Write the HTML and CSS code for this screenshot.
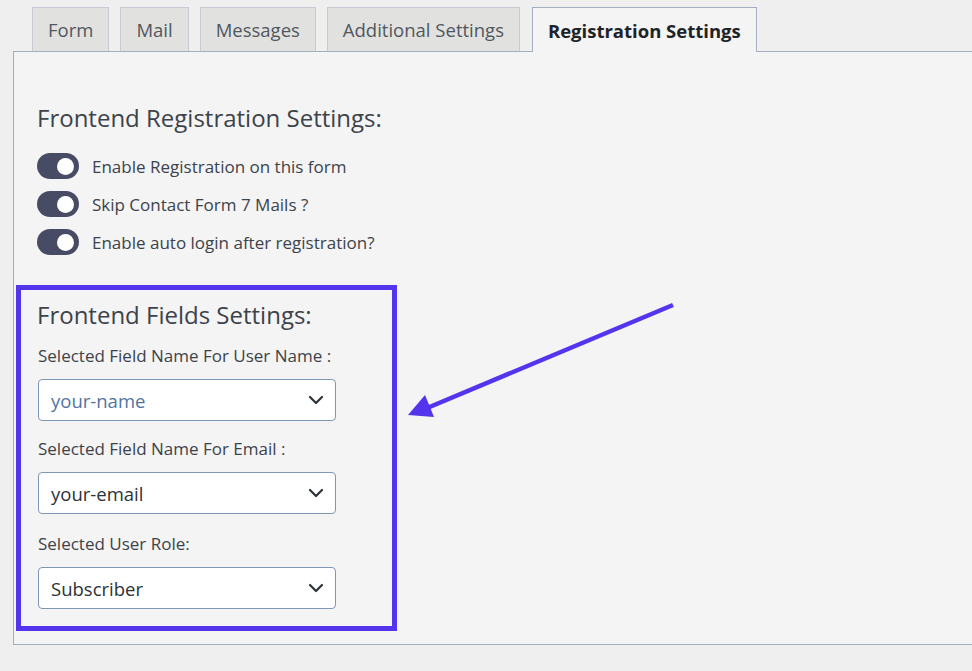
FILE: index.html
```html
<!DOCTYPE html>
<html lang="en">
<head>
<meta charset="utf-8">
<title>Registration Settings</title>
<link rel="stylesheet" href="styles.css">
</head>
<body>
<div class="page">
  <nav class="tabs">
    <a class="tab">Form</a>
    <a class="tab">Mail</a>
    <a class="tab">Messages</a>
    <a class="tab">Additional Settings</a>
    <a class="tab tab-active">Registration Settings</a>
  </nav>
  <div class="panel">
    <h2 class="section-title">Frontend Registration Settings:</h2>
    <ul class="toggles">
      <li class="toggle-row"><span class="toggle"><span class="knob"></span></span><span class="toggle-label">Enable Registration on this form</span></li>
      <li class="toggle-row"><span class="toggle"><span class="knob"></span></span><span class="toggle-label">Skip Contact Form 7 Mails ?</span></li>
      <li class="toggle-row"><span class="toggle"><span class="knob"></span></span><span class="toggle-label">Enable auto login after registration?</span></li>
    </ul>
    <div class="fields-box">
      <h2 class="section-title">Frontend Fields Settings:</h2>
      <div class="field field-first">
        <label class="field-label">Selected Field Name For User Name :</label>
        <div class="select select-focus"><span>your-name</span><svg class="chev" width="16" height="10" viewBox="0 0 16 10"><path d="M2 2l6 6 6-6" fill="none" stroke="#2c3338" stroke-width="2.2" stroke-linecap="round" stroke-linejoin="round"/></svg></div>
      </div>
      <div class="field field-second">
        <label class="field-label">Selected Field Name For Email :</label>
        <div class="select"><span>your-email</span><svg class="chev" width="16" height="10" viewBox="0 0 16 10"><path d="M2 2l6 6 6-6" fill="none" stroke="#2c3338" stroke-width="2.2" stroke-linecap="round" stroke-linejoin="round"/></svg></div>
      </div>
      <div class="field field-third">
        <label class="field-label">Selected User Role:</label>
        <div class="select"><span>Subscriber</span><svg class="chev" width="16" height="10" viewBox="0 0 16 10"><path d="M2 2l6 6 6-6" fill="none" stroke="#2c3338" stroke-width="2.2" stroke-linecap="round" stroke-linejoin="round"/></svg></div>
      </div>
    </div>
  </div>
  <svg class="arrow" width="290" height="140" viewBox="0 0 290 140">
    <line x1="273" y1="10" x2="20" y2="116" stroke="#5534ee" stroke-width="4.5"/>
    <polygon points="8,120 25,100 34,122" fill="#5534ee"/>
  </svg>
</div>
</body>
</html>
```
FILE: styles.css
```css
* { box-sizing: border-box; }
html, body { margin: 0; padding: 0; }
body {
  background: #efefef;
  font-family: "Open Sans", "Noto Sans", sans-serif;
  color: #3c434a;
  overflow: hidden;
}
.page {
  position: relative;
  width: 972px;
  height: 671px;
  overflow: hidden;
  padding-top: 7px;
}
.tabs {
  display: flex;
  gap: 11px;
  padding-left: 32px;
  margin-bottom: -1px;
  position: relative;
  z-index: 1;
}
.tab {
  display: flex;
  align-items: center;
  height: 44px;
  padding: 0 15px;
  background: #e1e2e0;
  border: 1px solid #c5cad3;
  border-bottom: none;
  font-size: 18.5px;
  color: #50575e;
  text-decoration: none;
}
.tab-active {
  margin-left: 1px;
  background: #f4f4f4;
  border-color: #a3afc0;
  height: 45px;
  font-weight: 700;
  color: #1d2327;
}
.panel {
  margin-left: 13px;
  margin-right: -20px;
  background: #f4f4f4;
  border: 1px solid #a3afc0;
  padding: 51px 0 13px 23px;
}
.section-title {
  margin: 0;
  font-size: 24px;
  line-height: 30px;
  font-weight: 400;
  color: #3c434a;
}
.toggles {
  list-style: none;
  margin: 20px 0 0;
  padding: 0;
}
.toggle-row {
  display: flex;
  align-items: center;
  gap: 13px;
  height: 26px;
  margin-bottom: 12px;
}
.toggle-row:last-child { margin-bottom: 0; }
.toggle {
  display: flex;
  align-items: center;
  justify-content: flex-end;
  width: 42px;
  height: 26px;
  padding-right: 5px;
  border-radius: 13px;
  background: #474c64;
}
.knob {
  width: 17px;
  height: 17px;
  border-radius: 50%;
  background: #ffffff;
}
.toggle-label {
  font-size: 17px;
  color: #3c434a;
}
.fields-box {
  width: 381px;
  margin: 30px 0 0 -21px;
  border: 5px solid #5534ee;
  padding: 10px 0 17px 16px;
}
.field { display: flex; flex-direction: column; align-items: flex-start; }
.field-first { margin-top: 15px; }
.field-second { margin-top: 17px; }
.field-third { margin-top: 19px; }
.field-label {
  font-size: 17px;
  line-height: 22px;
  color: #3c434a;
  padding-left: 1px;
}
.select {
  margin-top: 12px;
  margin-left: 1px;
  width: 298px;
  height: 42px;
  display: flex;
  align-items: center;
  justify-content: space-between;
  padding: 0 11px 0 12px;
  background: #ffffff;
  border: 1px solid #7f97b6;
  border-radius: 4px;
  font-size: 18.5px;
  color: #2c3338;
}
.select-focus { color: #52759f; }
.chev { display: block; }
.arrow {
  position: absolute;
  left: 400px;
  top: 295px;
}
```
